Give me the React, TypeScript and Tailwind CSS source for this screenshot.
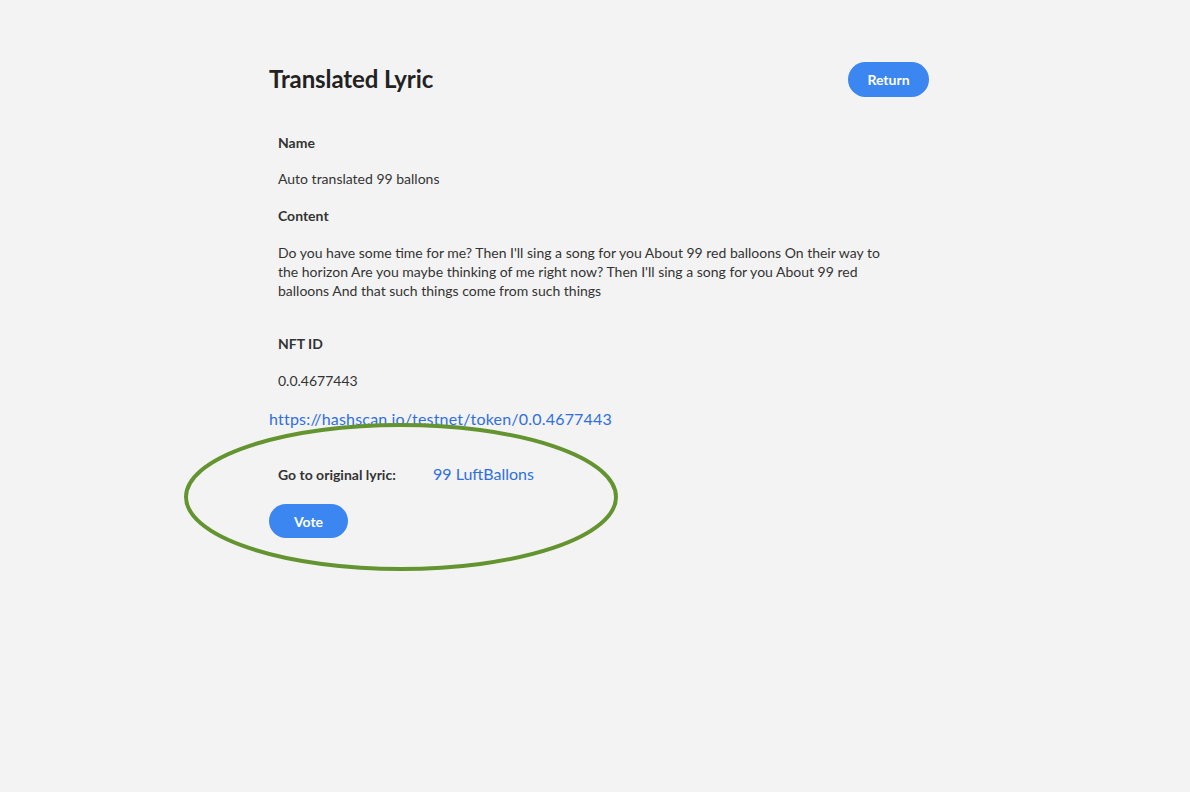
import React from "react";

const font = { fontFamily: '"Lato", "Liberation Sans", sans-serif' };

export default function App() {
  return (
    <div className="min-h-screen w-full bg-[#f3f3f3] text-[#333333]" style={font}>
      <div className="relative ml-[269px] w-[660px] pt-[61px]">
        {/* header */}
        <div className="flex items-center justify-between">
          <h1 className="text-[24px] font-bold tracking-[-0.1px] text-[#222222]">Translated Lyric</h1>
          <button className="h-[35px] w-[81px] rounded-full bg-[#3b86f0] text-[14px] font-bold text-white">
            Return
          </button>
        </div>

        {/* details */}
        <div className="mt-[36px] w-[640px] pl-[9px] pr-[10px] text-[14px]">
          <p className="font-bold leading-[19px]">Name</p>
          <p className="mt-[17px] leading-[19px]">Auto translated 99 ballons</p>
          <p className="mt-[18px] font-bold leading-[19px]">Content</p>
          <p className="mt-[18px] leading-[19px]">
            Do you have some time for me? Then I'll sing a song for you About 99 red balloons On their way to the
            horizon Are you maybe thinking of me right now? Then I'll sing a song for you About 99 red balloons And
            that such things come from such things
          </p>
          <p className="mt-[34px] font-bold leading-[19px]">NFT ID</p>
          <p className="mt-[18px] leading-[19px]">0.0.4677443</p>
        </div>

        <a className="mt-[19px] block text-[16px] leading-[20px] tracking-[0.2px] text-[#2f6fe0]">
          https://hashscan.io/testnet/token/0.0.4677443
        </a>

        <div className="mt-[33px] flex items-center pl-[9px]">
          <span className="w-[155px] text-[14px] font-bold">Go to original lyric:</span>
          <a className="text-[16px] text-[#2f6fe0]">99 LuftBallons</a>
        </div>

        <button className="mt-[18px] h-[34px] w-[79px] rounded-full bg-[#3b86f0] text-[14px] font-bold text-white">
          Vote
        </button>

        {/* annotation ellipse */}
        <svg
          className="pointer-events-none absolute left-[-86px] top-[421px]"
          width="438"
          height="152"
          viewBox="0 0 438 152"
        >
          <ellipse cx="218" cy="76" rx="215" ry="72" fill="none" stroke="#63942f" strokeWidth="4" />
        </svg>
      </div>
    </div>
  );
}
